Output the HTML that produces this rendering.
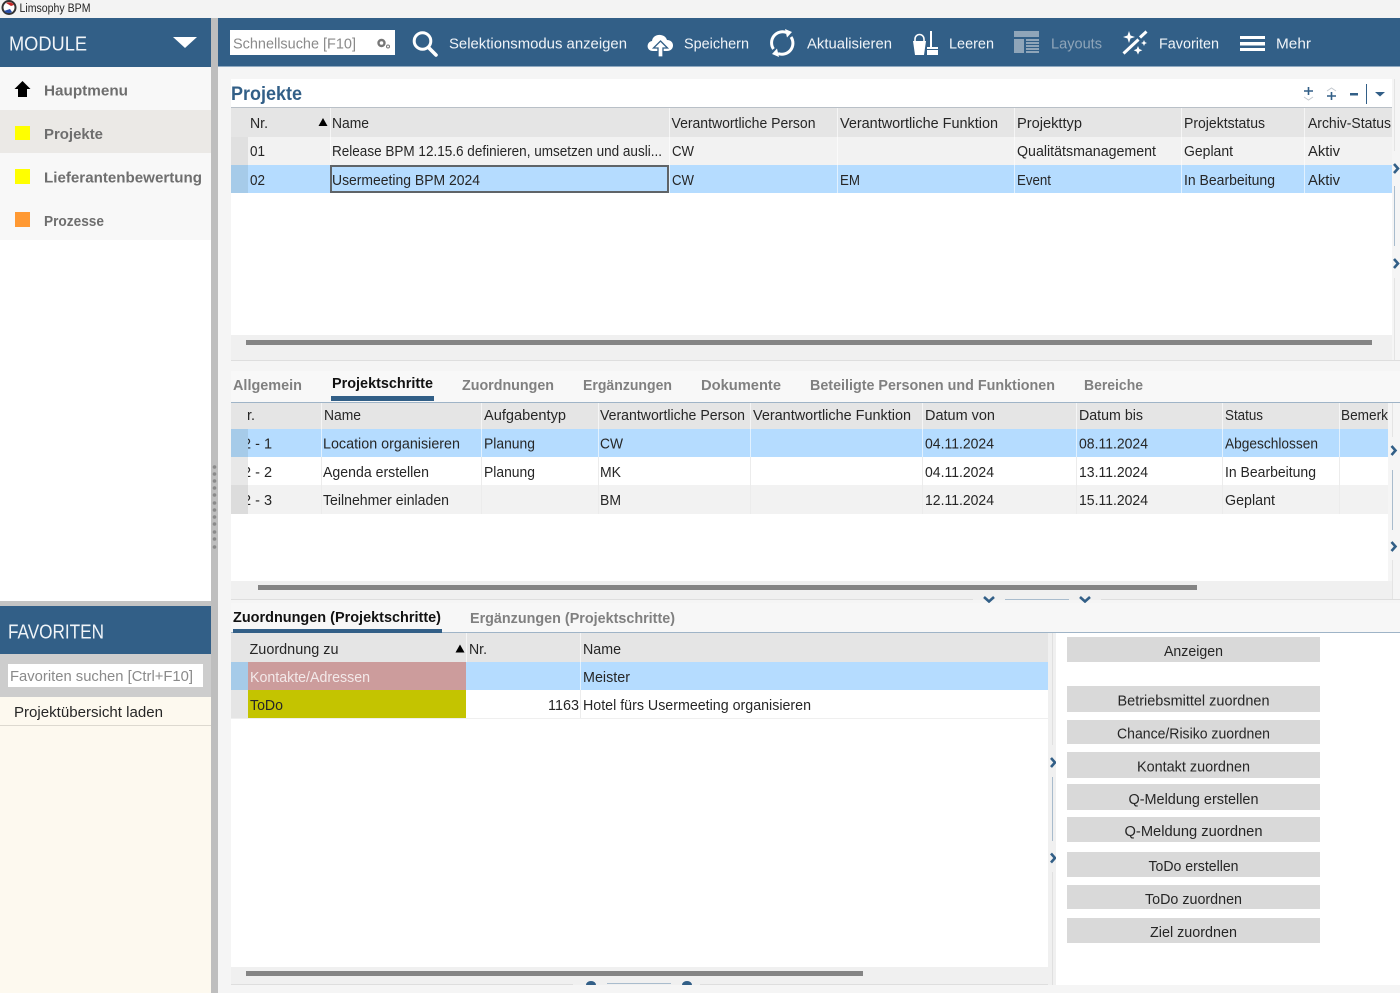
<!DOCTYPE html>
<html lang="de"><head><meta charset="utf-8"><title>Limsophy BPM</title>
<style>
html,body{margin:0;padding:0;width:1400px;height:993px;overflow:hidden;background:#f5f5f5}
svg{display:block}
text{font-family:"Liberation Sans",sans-serif;font-size:15px;fill:#262626}
.w{fill:#f0f4f8}.b{font-weight:bold;fill:#6e6e6e}.k{font-weight:bold;fill:#111}.g{fill:#8a8a8a}
</style></head><body>
<svg xmlns="http://www.w3.org/2000/svg" width="1400" height="993" viewBox="0 0 1400 993">
<!-- base -->
<rect width="1400" height="993" fill="#f5f5f5"/>
<rect y="0" width="1400" height="18" fill="#f3f3f3"/>
<rect y="18" width="1400" height="49" fill="#325f87"/>
<rect y="66" x="218" width="1182" height="1" fill="#8fa9c0"/>
<!-- title -->
<circle cx="9" cy="7.500" r="6.500" fill="#fff" stroke="#333" stroke-width="2"/>
<path d="M6 3a6 6 0 0 1 8 2l-3 1z" fill="#c62828"/><path d="M4 11a6 6 0 0 0 8 1l-2-3z" fill="#2a4fa8"/>
<text x="19.500" y="12" style="font-size:11.500px" textLength="71" lengthAdjust="spacingAndGlyphs">Limsophy BPM</text>
<!-- sidebar -->
<rect x="0" y="67" width="211" height="534" fill="#fff"/>
<rect x="0" y="67" width="211" height="173" fill="#f8f8f8"/>
<rect x="0" y="110" width="211" height="43" fill="#ebe9e6"/>
<rect x="211" y="18" width="7" height="975" fill="#bebebe"/>
<g fill="#8a8a8a"><circle cx="214.500" cy="467" r="1.800"/><circle cx="214.500" cy="474" r="1.800"/><circle cx="214.500" cy="481" r="1.800"/><circle cx="214.500" cy="488" r="1.800"/><circle cx="214.500" cy="495" r="1.800"/><circle cx="214.500" cy="503" r="1.800"/><circle cx="214.500" cy="510" r="1.800"/><circle cx="214.500" cy="517" r="1.800"/><circle cx="214.500" cy="524" r="1.800"/><circle cx="214.500" cy="532" r="1.800"/><circle cx="214.500" cy="539" r="1.800"/><circle cx="214.500" cy="547" r="1.800"/></g>
<text x="9" y="50.500" class="w" style="font-size:20px" textLength="78" lengthAdjust="spacingAndGlyphs">MODULE</text>
<path d="M173 37h24l-12 11z" fill="#fff"/>
<path d="M22.500 81l8 8h-3.500v8h-9v-8h-3.500z" fill="#000"/>
<rect x="15" y="126" width="15" height="14" fill="#ffff00"/>
<rect x="15" y="169" width="15" height="15" fill="#ffff00"/>
<rect x="15" y="212" width="15" height="15" fill="#ff9933"/>
<text x="44" y="95.500" class="b" textLength="84" lengthAdjust="spacingAndGlyphs">Hauptmenu</text>
<text x="44" y="139" class="b" textLength="59" lengthAdjust="spacingAndGlyphs">Projekte</text>
<text x="44" y="182.500" class="b" textLength="158" lengthAdjust="spacingAndGlyphs">Lieferantenbewertung</text>
<text x="44" y="226" class="b" textLength="60" lengthAdjust="spacingAndGlyphs">Prozesse</text>
<!-- favoriten -->
<rect x="0" y="601" width="211" height="5" fill="#c4c4c4"/>
<rect x="0" y="606" width="211" height="48" fill="#325f87"/>
<text x="8" y="638.500" class="w" style="font-size:20px" textLength="96" lengthAdjust="spacingAndGlyphs">FAVORITEN</text>
<rect x="0" y="654" width="211" height="43" fill="#cdcdcd"/>
<rect x="8" y="664" width="195" height="23" fill="#fff"/>
<text x="10" y="681" class="g" textLength="183" lengthAdjust="spacingAndGlyphs">Favoriten suchen [Ctrl+F10]</text>
<rect x="0" y="697" width="211" height="296" fill="#fdf9ef"/>
<rect x="0" y="725" width="211" height="1" fill="#ddd9d0"/>
<text x="14" y="717" textLength="149" lengthAdjust="spacingAndGlyphs">Projektübersicht laden</text>
<!-- toolbar -->
<rect x="230" y="30" width="165" height="25" fill="#fff"/>
<text x="233" y="48.500" class="g" textLength="123" lengthAdjust="spacingAndGlyphs">Schnellsuche [F10]</text>
<circle cx="381.500" cy="43" r="3" fill="none" stroke="#777" stroke-width="2.400"/><circle cx="388" cy="46.500" r="1.500" fill="none" stroke="#777"/>
<circle cx="422.500" cy="41" r="8.300" fill="none" stroke="#fff" stroke-width="3"/><path d="M428.500 47.500l7.500 7.500" stroke="#fff" stroke-width="3.600" stroke-linecap="round"/>
<text x="449" y="48.500" class="w" textLength="178" lengthAdjust="spacingAndGlyphs">Selektionsmodus anzeigen</text>
<path d="M653 51c-7 0-7-9-1-10 1-8 13-8 15-1 8 0 8 11 0 11z" fill="#fff"/>
<path d="M660.500 41l7 7h-4.500v9h-5v-9h-4.500z" fill="#fff" stroke="#325f87" stroke-width="1.300"/>
<text x="684" y="48.500" class="w" textLength="65" lengthAdjust="spacingAndGlyphs">Speichern</text>
<path d="M773.500 49a11 11 0 0 1 13-16.500M791 37a11 11 0 0 1-13 16.500" fill="none" stroke="#fff" stroke-width="3"/>
<path d="M785 29l7 3-5 5.500zM779 57l-7-3 5-5.500z" fill="#fff"/>
<text x="807" y="48.500" class="w" textLength="85" lengthAdjust="spacingAndGlyphs">Aktualisieren</text>
<path d="M913 41h13l-2 14h-9z" fill="#fff"/><path d="M915 41v-2a4.500 4.500 0 0 1 9 0v2" fill="none" stroke="#fff" stroke-width="1.600"/>
<path d="M931 31v16" stroke="#fff" stroke-width="2"/><rect x="927" y="47" width="11" height="2" fill="#fff"/><rect x="927" y="50" width="11" height="5" fill="#fff"/>
<text x="949" y="48.500" class="w" textLength="45" lengthAdjust="spacingAndGlyphs">Leeren</text>
<g fill="#8fa5b9"><rect x="1014" y="31" width="25" height="6"/><rect x="1014" y="39" width="10" height="14"/><rect x="1026" y="39" width="13" height="2"/><rect x="1026" y="42" width="13" height="2"/><rect x="1026" y="45" width="13" height="2"/><rect x="1026" y="48" width="13" height="2"/><rect x="1026" y="51" width="13" height="2"/></g>
<text x="1051" y="48.500" style="fill:#8fa5b9" textLength="51" lengthAdjust="spacingAndGlyphs">Layouts</text>
<path d="M1123.500 53.500l15-14" stroke="#fff" stroke-width="3"/><path d="M1140 37.500l6.500-6" stroke="#fff" stroke-width="3"/>
<path d="M1129 31l1.500 4.500 4.500 1.500-4.500 1.500-1.500 4.500-1.500-4.500-4.500-1.500 4.500-1.500zM1138 46l1.300 3 3 1.300-3 1.300-1.300 3-1.300-3-3-1.300 3-1.300zM1144 40l.9 2.100 2.100.9-2.100.9-.9 2.100-.9-2.100-2.100-.9 2.100-.9z" fill="#fff"/>
<text x="1159" y="48.500" class="w" textLength="60" lengthAdjust="spacingAndGlyphs">Favoriten</text>
<g fill="#fff"><rect x="1240" y="36" width="25" height="3"/><rect x="1240" y="42" width="25" height="3.500"/><rect x="1240" y="48" width="25" height="3"/></g>
<text x="1276" y="48.500" class="w" textLength="35" lengthAdjust="spacingAndGlyphs">Mehr</text>
<!-- Panel 1 -->
<rect x="231" y="79" width="1161" height="256" fill="#fff"/>
<text x="231" y="100" style="font-size:19px;font-weight:bold;fill:#325f87" textLength="71" lengthAdjust="spacingAndGlyphs">Projekte</text>
<g fill="none" stroke="#325f87"><path d="M1304 91h9M1308.500 87v8" stroke-width="1.600"/><path d="M1327 96h9M1331.500 92v8" stroke-width="1.600"/></g>
<path d="M1304 97l4.500 3 4.500-3M1327 91l4.500-3 4.500 3" fill="none" stroke="#c3c9cf"/>
<rect x="1350" y="93" width="8" height="2.500" fill="#325f87"/>
<rect x="1366" y="84" width="1" height="20" fill="#325f87"/>
<path d="M1375 92h10l-5 4.500z" fill="#325f87"/>
<rect x="231" y="107" width="1161" height="1" fill="#b9c0c7"/>
<rect x="231" y="108" width="1161" height="29" fill="#e5e5e5"/>
<rect x="231" y="137" width="1161" height="28" fill="#f2f2f2"/>
<rect x="231" y="165" width="1161" height="28" fill="#b5dcff"/>
<rect x="231" y="137" width="17" height="28" fill="#e0e0e0"/>
<rect x="231" y="165" width="17" height="28" fill="#a6cbe9"/>
<g fill="#fff" opacity=".6"><rect x="330" y="108" width="1" height="85"/><rect x="669" y="108" width="1" height="85"/><rect x="837" y="108" width="1" height="85"/><rect x="1014" y="108" width="1" height="85"/><rect x="1181" y="108" width="1" height="85"/><rect x="1304" y="108" width="1" height="85"/></g>
<rect x="331" y="166" width="337" height="26" fill="none" stroke="#5f6468" stroke-width="2"/>
<path d="M318.500 126l4.500-8 4.500 8z" fill="#000"/>
<g>
<text x="250" y="128" textLength="18" lengthAdjust="spacingAndGlyphs">Nr.</text>
<text x="332" y="128" textLength="37" lengthAdjust="spacingAndGlyphs">Name</text>
<text x="671.500" y="128" textLength="144" lengthAdjust="spacingAndGlyphs">Verantwortliche Person</text>
<text x="840" y="128" textLength="158" lengthAdjust="spacingAndGlyphs">Verantwortliche Funktion</text>
<text x="1017" y="128" textLength="65" lengthAdjust="spacingAndGlyphs">Projekttyp</text>
<text x="1184" y="128" textLength="81" lengthAdjust="spacingAndGlyphs">Projektstatus</text>
<text x="1308" y="128" textLength="83" lengthAdjust="spacingAndGlyphs">Archiv-Status</text>
<text x="250" y="156" textLength="15" lengthAdjust="spacingAndGlyphs">01</text>
<text x="332" y="156" textLength="330" lengthAdjust="spacingAndGlyphs">Release BPM 12.15.6 definieren, umsetzen und ausli...</text>
<text x="672" y="156" textLength="22" lengthAdjust="spacingAndGlyphs">CW</text>
<text x="1017" y="156" textLength="139" lengthAdjust="spacingAndGlyphs">Qualitätsmanagement</text>
<text x="1184" y="156" textLength="49" lengthAdjust="spacingAndGlyphs">Geplant</text>
<text x="1308" y="156" textLength="32" lengthAdjust="spacingAndGlyphs">Aktiv</text>
<text x="250" y="185" textLength="15" lengthAdjust="spacingAndGlyphs">02</text>
<text x="332" y="185" textLength="148" lengthAdjust="spacingAndGlyphs">Usermeeting BPM 2024</text>
<text x="672" y="185" textLength="22" lengthAdjust="spacingAndGlyphs">CW</text>
<text x="840" y="185" textLength="20" lengthAdjust="spacingAndGlyphs">EM</text>
<text x="1017" y="185" textLength="34" lengthAdjust="spacingAndGlyphs">Event</text>
<text x="1184" y="185" textLength="91" lengthAdjust="spacingAndGlyphs">In Bearbeitung</text>
<text x="1308" y="185" textLength="32" lengthAdjust="spacingAndGlyphs">Aktiv</text>
</g>
<rect x="231" y="335" width="1161" height="25" fill="#f0f0f0"/>
<rect x="246" y="340" width="1126" height="5" fill="#858585"/>
<rect x="231" y="360" width="1169" height="1" fill="#dedede"/>
<!-- right splitter top -->
<rect x="1394" y="186" width="1" height="60" fill="#a9bccd"/>
<rect x="1394" y="79" width="1" height="72" fill="#e4e4e4"/>
<rect x="1394" y="278" width="1" height="82" fill="#e4e4e4"/>
<g fill="none" stroke="#325f87" stroke-width="2.600"><path d="M1394 164l4 4.500-4 4.500M1394 259l4 4.500-4 4.500"/></g>
<!-- Tabs 2 -->
<rect x="231" y="371" width="1169" height="31" fill="#f8f8f8"/>
<rect x="231" y="402" width="1169" height="1" fill="#9fb4c7"/>
<rect x="331" y="396" width="103" height="5" fill="#325f87"/>
<text x="233" y="390" class="b" style="fill:#808080" textLength="69" lengthAdjust="spacingAndGlyphs">Allgemein</text>
<text x="332" y="388" class="k" textLength="101" lengthAdjust="spacingAndGlyphs">Projektschritte</text>
<text x="462" y="390" class="b" style="fill:#808080" textLength="92" lengthAdjust="spacingAndGlyphs">Zuordnungen</text>
<text x="583" y="390" class="b" style="fill:#808080" textLength="89" lengthAdjust="spacingAndGlyphs">Ergänzungen</text>
<text x="701" y="390" class="b" style="fill:#808080" textLength="80" lengthAdjust="spacingAndGlyphs">Dokumente</text>
<text x="810" y="390" class="b" style="fill:#808080" textLength="245" lengthAdjust="spacingAndGlyphs">Beteiligte Personen und Funktionen</text>
<text x="1084" y="390" class="b" style="fill:#808080" textLength="59" lengthAdjust="spacingAndGlyphs">Bereiche</text>
<!-- Table 2 -->
<rect x="231" y="403" width="1157" height="178" fill="#fff"/>
<rect x="231" y="403" width="1157" height="26" fill="#e5e5e5"/>
<rect x="231" y="429" width="1157" height="28" fill="#b5dcff"/>
<rect x="231" y="485" width="1157" height="29" fill="#f2f2f2"/>
<g>
<text x="247" y="420" textLength="8" lengthAdjust="spacingAndGlyphs">r.</text>
<text x="324" y="420" textLength="37" lengthAdjust="spacingAndGlyphs">Name</text>
<text x="484" y="420" textLength="82" lengthAdjust="spacingAndGlyphs">Aufgabentyp</text>
<text x="600" y="420" textLength="145" lengthAdjust="spacingAndGlyphs">Verantwortliche Person</text>
<text x="753" y="420" textLength="158" lengthAdjust="spacingAndGlyphs">Verantwortliche Funktion</text>
<text x="925" y="420" textLength="70" lengthAdjust="spacingAndGlyphs">Datum von</text>
<text x="1079" y="420" textLength="64" lengthAdjust="spacingAndGlyphs">Datum bis</text>
<text x="1225" y="420" textLength="38" lengthAdjust="spacingAndGlyphs">Status</text>
<text x="1341" y="420" textLength="47" lengthAdjust="spacingAndGlyphs">Bemerk</text>
<text x="243" y="448.500" textLength="29" lengthAdjust="spacingAndGlyphs">2 - 1</text>
<text x="243" y="477" textLength="29" lengthAdjust="spacingAndGlyphs">2 - 2</text>
<text x="243" y="505" textLength="29" lengthAdjust="spacingAndGlyphs">2 - 3</text>
<text x="323" y="448.500" textLength="137" lengthAdjust="spacingAndGlyphs">Location organisieren</text>
<text x="484" y="448.500" textLength="51" lengthAdjust="spacingAndGlyphs">Planung</text>
<text x="600" y="448.500" textLength="23" lengthAdjust="spacingAndGlyphs">CW</text>
<text x="925" y="448.500" textLength="69" lengthAdjust="spacingAndGlyphs">04.11.2024</text>
<text x="1079" y="448.500" textLength="69" lengthAdjust="spacingAndGlyphs">08.11.2024</text>
<text x="1225" y="448.500" textLength="93" lengthAdjust="spacingAndGlyphs">Abgeschlossen</text>
<text x="323" y="477" textLength="106" lengthAdjust="spacingAndGlyphs">Agenda erstellen</text>
<text x="484" y="477" textLength="51" lengthAdjust="spacingAndGlyphs">Planung</text>
<text x="600" y="477" textLength="21" lengthAdjust="spacingAndGlyphs">MK</text>
<text x="925" y="477" textLength="69" lengthAdjust="spacingAndGlyphs">04.11.2024</text>
<text x="1079" y="477" textLength="69" lengthAdjust="spacingAndGlyphs">13.11.2024</text>
<text x="1225" y="477" textLength="91" lengthAdjust="spacingAndGlyphs">In Bearbeitung</text>
<text x="323" y="505" textLength="126" lengthAdjust="spacingAndGlyphs">Teilnehmer einladen</text>
<text x="600" y="505" textLength="21" lengthAdjust="spacingAndGlyphs">BM</text>
<text x="925" y="505" textLength="69" lengthAdjust="spacingAndGlyphs">12.11.2024</text>
<text x="1079" y="505" textLength="69" lengthAdjust="spacingAndGlyphs">15.11.2024</text>
<text x="1225" y="505" textLength="50" lengthAdjust="spacingAndGlyphs">Geplant</text>
</g>
<rect x="231" y="429" width="17" height="28" fill="#a6cbe9"/>
<rect x="231" y="457" width="17" height="28" fill="#e8e8e8"/>
<rect x="231" y="485" width="17" height="29" fill="#dcdcdc"/>
<g fill="#fff" opacity=".6"><rect x="321" y="403" width="1" height="54"/><rect x="481" y="403" width="1" height="54"/><rect x="598" y="403" width="1" height="54"/><rect x="750" y="403" width="1" height="54"/><rect x="922" y="403" width="1" height="54"/><rect x="1076" y="403" width="1" height="54"/><rect x="1222" y="403" width="1" height="54"/><rect x="1339" y="403" width="1" height="54"/></g>
<g fill="#ececec"><rect x="321" y="457" width="1" height="57"/><rect x="481" y="457" width="1" height="57"/><rect x="598" y="457" width="1" height="57"/><rect x="750" y="457" width="1" height="57"/><rect x="922" y="457" width="1" height="57"/><rect x="1076" y="457" width="1" height="57"/><rect x="1222" y="457" width="1" height="57"/><rect x="1339" y="457" width="1" height="57"/></g>
<rect x="231" y="581" width="1161" height="19" fill="#f0f0f0"/>
<rect x="258" y="585" width="939" height="5" fill="#858585"/>
<!-- splitter 2 right -->
<rect x="1392" y="470" width="1" height="60" fill="#a9bccd"/>
<rect x="1392" y="403" width="1" height="34" fill="#e4e4e4"/>
<rect x="1392" y="560" width="1" height="40" fill="#e4e4e4"/>
<g fill="none" stroke="#325f87" stroke-width="2.600"><path d="M1391.500 446l4 4.500-4 4.500M1391.500 542l4 4.500-4 4.500"/></g>
<rect x="231" y="599" width="742" height="1" fill="#dedede"/><rect x="1101" y="599" width="299" height="1" fill="#dedede"/>
<rect x="1005" y="599" width="64" height="1" fill="#a9bccd"/>
<g fill="none" stroke="#325f87" stroke-width="2.600"><path d="M984 597l5 4.500 5-4.500M1080 597l5 4.500 5-4.500"/></g>
<!-- Tabs 3 -->
<rect x="231" y="603" width="1169" height="29" fill="#f7f7f7"/>
<rect x="231" y="632" width="1169" height="1" fill="#9fb4c7"/>
<rect x="233" y="629" width="209" height="4" fill="#325f87"/>
<text x="233" y="622" class="k" textLength="208" lengthAdjust="spacingAndGlyphs">Zuordnungen (Projektschritte)</text>
<text x="470" y="623" class="b" style="fill:#808080" textLength="205" lengthAdjust="spacingAndGlyphs">Ergänzungen (Projektschritte)</text>
<!-- Table 3 -->
<rect x="231" y="633" width="817" height="334" fill="#fff"/>
<rect x="231" y="633" width="817" height="29" fill="#e5e5e5"/>
<rect x="231" y="662" width="817" height="28" fill="#b5dcff"/>
<rect x="231" y="662" width="17" height="28" fill="#a6cbe9"/>
<rect x="231" y="690" width="17" height="28" fill="#e5e5e5"/>
<rect x="248" y="662" width="218" height="28" fill="#cc9c9c"/>
<rect x="248" y="690" width="218" height="28" fill="#c4c400"/>
<rect x="231" y="718" width="817" height="1" fill="#efefef"/>
<g fill="#fff" opacity=".6"><rect x="466" y="633" width="1" height="29"/><rect x="580" y="633" width="1" height="57"/></g>
<rect x="580" y="690" width="1" height="28" fill="#ececec"/>
<path d="M455.500 652.500l4.500-8 4.500 8z" fill="#000"/>
<text x="249.500" y="654" textLength="89" lengthAdjust="spacingAndGlyphs">Zuordnung zu</text>
<text x="469" y="654" textLength="18" lengthAdjust="spacingAndGlyphs">Nr.</text>
<text x="583" y="654" textLength="38" lengthAdjust="spacingAndGlyphs">Name</text>
<text x="250" y="682" style="fill:#f3e9e9" textLength="120" lengthAdjust="spacingAndGlyphs">Kontakte/Adressen</text>
<text x="583" y="682" textLength="47" lengthAdjust="spacingAndGlyphs">Meister</text>
<text x="250" y="710" textLength="33" lengthAdjust="spacingAndGlyphs">ToDo</text>
<text x="548" y="710" textLength="31" lengthAdjust="spacingAndGlyphs">1163</text>
<text x="583" y="710" textLength="228" lengthAdjust="spacingAndGlyphs">Hotel fürs Usermeeting organisieren</text>
<rect x="231" y="967" width="817" height="18" fill="#f0f0f0"/>
<rect x="246" y="971" width="617" height="5" fill="#858585"/>
<rect x="231" y="984" width="342" height="1" fill="#dedede"/><rect x="700" y="984" width="348" height="1" fill="#dedede"/>
<rect x="607" y="983" width="64" height="1" fill="#a9bccd"/>
<path d="M586 985a5 4 0 0 1 10 0zM682 985a5 4 0 0 1 10 0z" fill="#325f87"/>
<!-- Mid splitter -->
<rect x="1048" y="633" width="8" height="352" fill="#f0f0f0"/>
<rect x="1052" y="633" width="1" height="112" fill="#e0e0e0"/>
<rect x="1052" y="777" width="1" height="64" fill="#a9bccd"/>
<rect x="1052" y="872" width="1" height="113" fill="#e0e0e0"/>
<g fill="none" stroke="#325f87" stroke-width="2.600"><path d="M1051 758l4 4.500-4 4.500M1051 853.500l4 4.500-4 4.500"/></g>
<!-- Right panel -->
<rect x="1056" y="633" width="344" height="352" fill="#fff"/>
<g fill="#d9d9d9">
<rect x="1067" y="637" width="253" height="25"/>
<rect x="1067" y="686" width="253" height="26"/>
<rect x="1067" y="720" width="253" height="24"/>
<rect x="1067" y="752" width="253" height="26"/>
<rect x="1067" y="784" width="253" height="26"/>
<rect x="1067" y="817" width="253" height="25"/>
<rect x="1067" y="852" width="253" height="25"/>
<rect x="1067" y="885" width="253" height="24"/>
<rect x="1067" y="918" width="253" height="25"/>
</g>
<g text-anchor="middle">
<text x="1193.500" y="656" textLength="59" lengthAdjust="spacingAndGlyphs">Anzeigen</text>
<text x="1193.500" y="705.500" textLength="152" lengthAdjust="spacingAndGlyphs">Betriebsmittel zuordnen</text>
<text x="1193.500" y="738.500" textLength="153" lengthAdjust="spacingAndGlyphs">Chance/Risiko zuordnen</text>
<text x="1193.500" y="771.500" textLength="113" lengthAdjust="spacingAndGlyphs">Kontakt zuordnen</text>
<text x="1193.500" y="804" textLength="130" lengthAdjust="spacingAndGlyphs">Q-Meldung erstellen</text>
<text x="1193.500" y="836" textLength="138" lengthAdjust="spacingAndGlyphs">Q-Meldung zuordnen</text>
<text x="1193.500" y="871" textLength="90" lengthAdjust="spacingAndGlyphs">ToDo erstellen</text>
<text x="1193.500" y="904" textLength="97" lengthAdjust="spacingAndGlyphs">ToDo zuordnen</text>
<text x="1193.500" y="937" textLength="87" lengthAdjust="spacingAndGlyphs">Ziel zuordnen</text>
</g>
</svg>
</body></html>
